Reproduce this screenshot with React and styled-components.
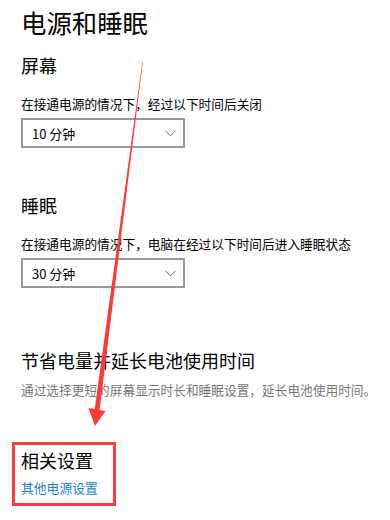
import styled, { createGlobalStyle } from "styled-components";

const Global = createGlobalStyle`
  html, body {
    margin: 0;
    padding: 0;
    background: #fff;
  }
  body {
    font-family: "Noto Sans CJK SC", "Noto Sans", sans-serif;
    color: #000;
  }
`;

const Page = styled.div`
  position: relative;
  width: 390px;
  height: 520px;
  overflow: hidden;
  padding: 9px 0 0 21px;
  box-sizing: border-box;
`;

const Title = styled.h1`
  margin: 0;
  font-size: 25.4px;
  line-height: 26px;
  font-weight: 400;
`;

const SectionTitle = styled.h2`
  margin: ${(p) => p.$top}px 0 0;
  font-size: 18px;
  line-height: 18px;
  font-weight: 400;
`;

const Desc = styled.p`
  margin: ${(p) => p.$top}px 0 0;
  font-size: 12.7px;
  line-height: 13px;
  white-space: nowrap;
  color: ${(p) => (p.$muted ? "#767676" : "#000")};
`;

const Select = styled.div`
  margin-top: 8px;
  width: 164px;
  height: 30px;
  box-sizing: border-box;
  border: 2px solid #999;
  display: flex;
  align-items: center;
  justify-content: space-between;
  padding: 0 7px 0 9px;
  font-size: 13px;
  color: #000;
`;

const Related = styled.div`
  margin: 46px 0 0 -9px;
  width: 104px;
  height: 64px;
  box-sizing: border-box;
  border: 3px solid #ff3b3b;
  padding: 6px 0 0 6px;
`;

const Link = styled.a`
  display: block;
  margin-top: 12px;
  font-size: 12.8px;
  line-height: 13px;
  color: #1a7fd6;
  white-space: nowrap;
`;

const Overlay = styled.svg`
  position: absolute;
  left: 0;
  top: 0;
  pointer-events: none;
`;

const Chevron = () => (
  <svg width="11" height="7" viewBox="0 0 11 7">
    <path d="M0.5 0.8 L5.5 5.8 L10.5 0.8" fill="none" stroke="#666" strokeWidth="1" />
  </svg>
);

const Dropdown = ({ value }) => (
  <Select>
    <span>{value}</span>
    <Chevron />
  </Select>
);

const App = () => {
  return (
    <Page>
      <Global />
      <Title>电源和睡眠</Title>

      <SectionTitle $top={21}>屏幕</SectionTitle>
      <Desc $top={23}>在接通电源的情况下，经过以下时间后关闭</Desc>
      <Dropdown value="10 分钟" />

      <SectionTitle $top={48}>睡眠</SectionTitle>
      <Desc $top={23}>在接通电源的情况下，电脑在经过以下时间后进入睡眠状态</Desc>
      <Dropdown value="30 分钟" />

      <SectionTitle $top={63}>节省电量并延长电池使用时间</SectionTitle>
      <Desc $top={14} $muted>
        通过选择更短的屏幕显示时长和睡眠设置，延长电池使用时间。
      </Desc>

      <Related>
        <SectionTitle $top={0}>相关设置</SectionTitle>
        <Link>其他电源设置</Link>
      </Related>

      <Overlay width="390" height="520" viewBox="0 0 390 520">
        <polygon points="142.3,62 142.8,62 99.6,410 94.6,410" fill="#ff3838" />
        <polygon points="88.5,408 105.5,411 95,426" fill="#ff3838" />
      </Overlay>
    </Page>
  );
};

export default App;
